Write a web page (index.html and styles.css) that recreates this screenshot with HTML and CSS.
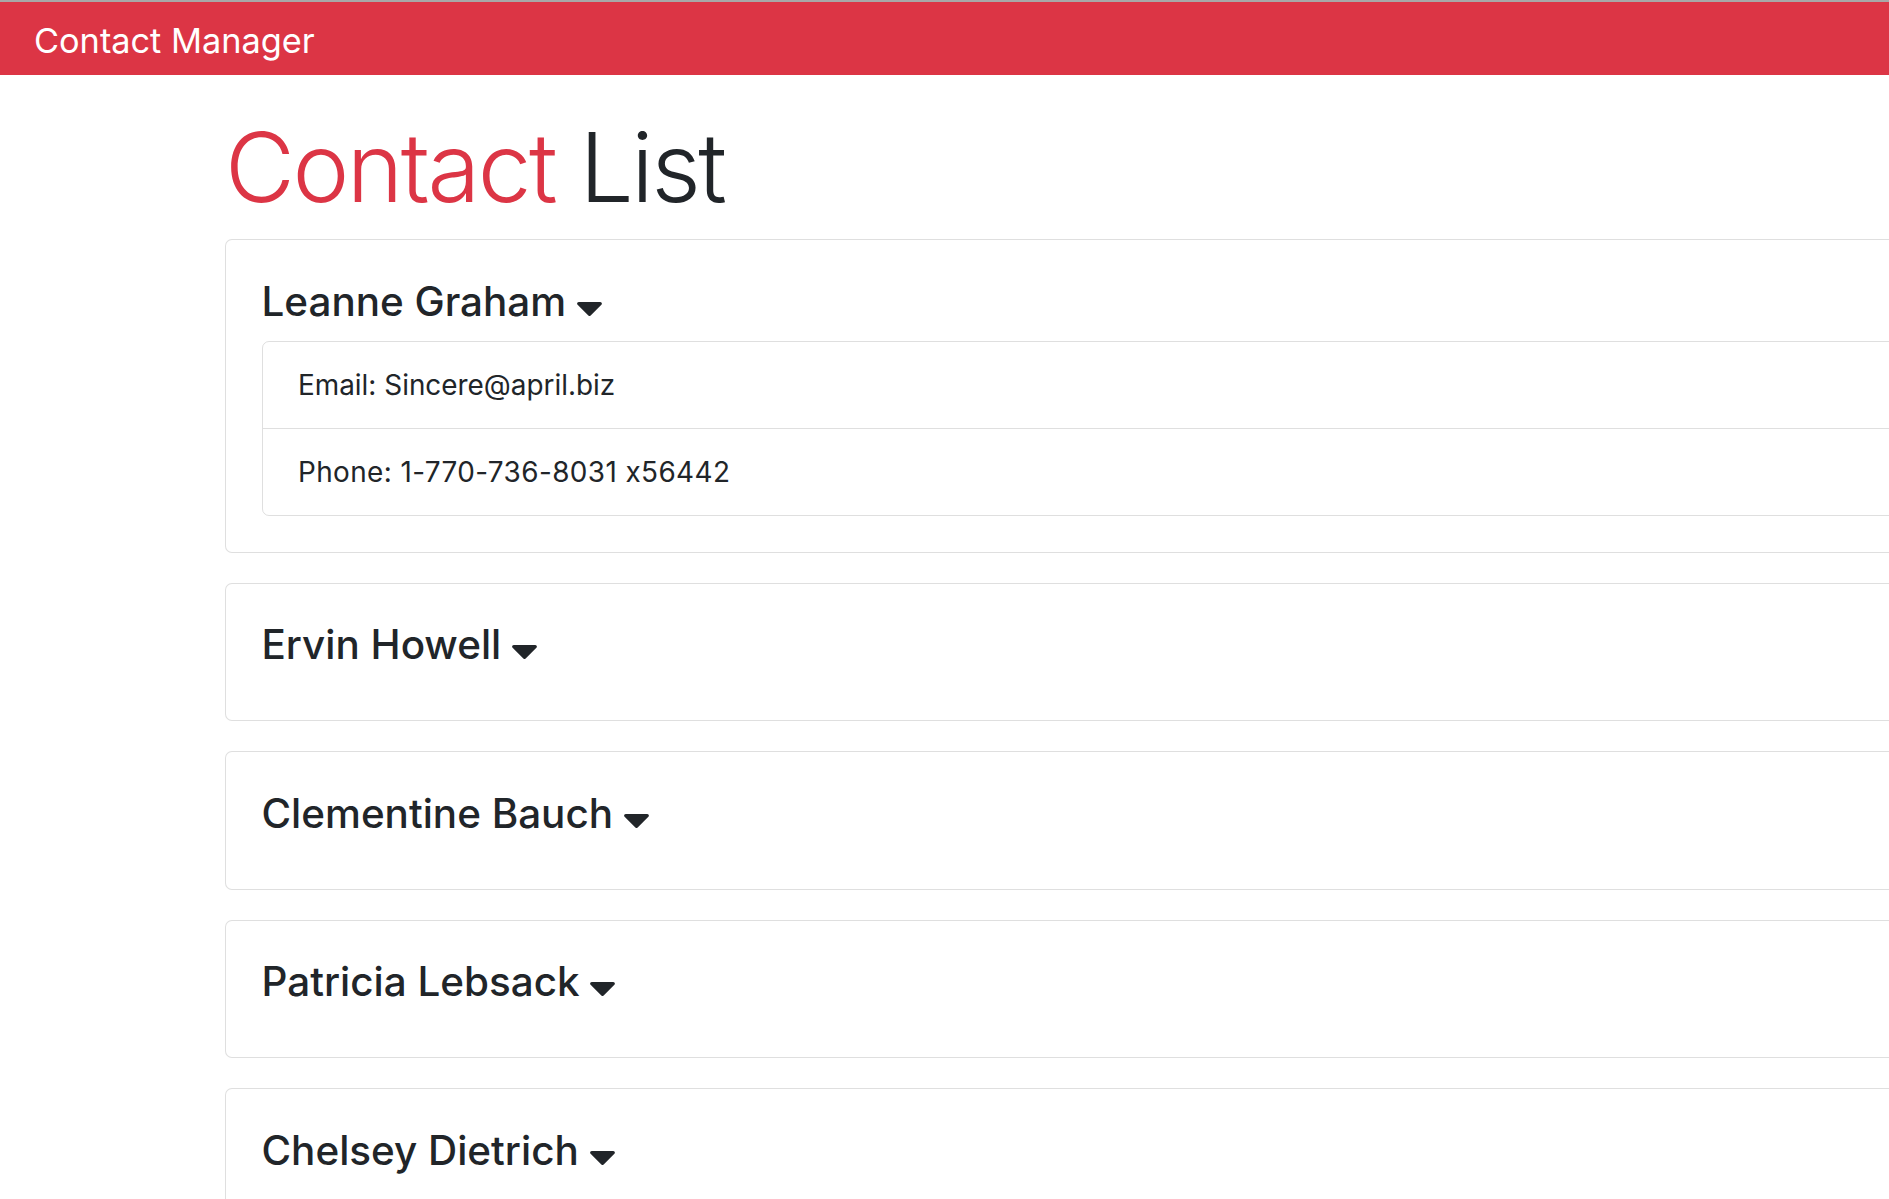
FILE: index.html
```html
<!DOCTYPE html>
<html lang="en">
<head>
<meta charset="utf-8">
<title>Contact Manager</title>
<link rel="stylesheet" href="styles.css">
</head>
<body>
<nav class="navbar">
  <span class="brand">Contact Manager</span>
</nav>
<main class="container">
  <h1 class="page-title"><span class="accent">Contact</span> List</h1>

  <div class="card">
    <div class="card-body">
      <h4 class="contact-name">Leanne Graham <svg class="caret" viewBox="13 192 294 168"><path d="M31.3 192h257.3c17.8 0 26.7 21.5 14.1 34.1L174.1 354.8c-7.8 7.8-20.5 7.8-28.3 0L17.2 226.1C4.6 213.5 13.5 192 31.3 192z"/></svg></h4>
      <ul class="list-group">
        <li class="list-group-item">Email: Sincere@april.biz</li>
        <li class="list-group-item phone">Phone: 1-770-736-8031 x56442</li>
      </ul>
    </div>
  </div>

  <div class="card">
    <div class="card-body">
      <h4 class="contact-name">Ervin Howell <svg class="caret" viewBox="13 192 294 168"><path d="M31.3 192h257.3c17.8 0 26.7 21.5 14.1 34.1L174.1 354.8c-7.8 7.8-20.5 7.8-28.3 0L17.2 226.1C4.6 213.5 13.5 192 31.3 192z"/></svg></h4>
    </div>
  </div>

  <div class="card">
    <div class="card-body">
      <h4 class="contact-name">Clementine Bauch <svg class="caret" viewBox="13 192 294 168"><path d="M31.3 192h257.3c17.8 0 26.7 21.5 14.1 34.1L174.1 354.8c-7.8 7.8-20.5 7.8-28.3 0L17.2 226.1C4.6 213.5 13.5 192 31.3 192z"/></svg></h4>
    </div>
  </div>

  <div class="card">
    <div class="card-body">
      <h4 class="contact-name">Patricia Lebsack <svg class="caret" viewBox="13 192 294 168"><path d="M31.3 192h257.3c17.8 0 26.7 21.5 14.1 34.1L174.1 354.8c-7.8 7.8-20.5 7.8-28.3 0L17.2 226.1C4.6 213.5 13.5 192 31.3 192z"/></svg></h4>
    </div>
  </div>

  <div class="card">
    <div class="card-body">
      <h4 class="contact-name">Chelsey Dietrich <svg class="caret" viewBox="13 192 294 168"><path d="M31.3 192h257.3c17.8 0 26.7 21.5 14.1 34.1L174.1 354.8c-7.8 7.8-20.5 7.8-28.3 0L17.2 226.1C4.6 213.5 13.5 192 31.3 192z"/></svg></h4>
    </div>
  </div>

  <div class="card">
    <div class="card-body">
      <h4 class="contact-name">Mrs. Dennis Schulist <svg class="caret" viewBox="13 192 294 168"><path d="M31.3 192h257.3c17.8 0 26.7 21.5 14.1 34.1L174.1 354.8c-7.8 7.8-20.5 7.8-28.3 0L17.2 226.1C4.6 213.5 13.5 192 31.3 192z"/></svg></h4>
    </div>
  </div>
</main>
</body>
</html>
```

FILE: styles.css
```css
html, body {
  margin: 0;
  padding: 0;
  overflow: hidden;
  background: #ffffff;
}

body {
  font-family: Inter, "Noto Sans", "Liberation Sans", sans-serif;
  font-feature-settings: "calt" 0;
  color: #212529;
  border-top: 2px solid #a8a8a8;
}

.navbar {
  height: 73px;
  background: #dc3545;
  display: flex;
  align-items: center;
  padding-left: 34px;
}

.brand {
  color: #ffffff;
  font-size: 34.3px;
  font-weight: 400;
  line-height: 1;
  padding-top: 6px;
}

.container {
  width: 1998px;
  margin-left: 225px;
  padding-top: 35px;
}

.page-title {
  margin: 0 0 14px 0;
  font-size: 96px;
  font-weight: 300;
  letter-spacing: -2.5px;
  line-height: 1.2;
  color: #212529;
}

.accent {
  color: #dc3545;
}

.card {
  border: 1px solid rgba(0, 0, 0, 0.125);
  border-radius: 7px;
  margin-bottom: 30px;
  background: #fff;
}

.card-body {
  padding: 35.5px;
}

.contact-name {
  margin: 0 0 14.2px 0;
  font-size: 40.4px;
  font-weight: 500;
  line-height: 51.2px;
  color: #212529;
}

.caret {
  width: 25px;
  height: 14px;
  fill: #212529;
  vertical-align: baseline;
}

.list-group {
  list-style: none;
  margin: 0;
  padding: 0;
  border: 1px solid rgba(0, 0, 0, 0.125);
  border-radius: 7px;
}

.list-group-item {
  padding: 22px 35.5px 21.6px;
  font-size: 27.9px;
  line-height: 42.6px;
  color: #212529;
}

.phone {
  letter-spacing: 0.4px;
}

.list-group-item + .list-group-item {
  border-top: 1px solid rgba(0, 0, 0, 0.125);
}
```
